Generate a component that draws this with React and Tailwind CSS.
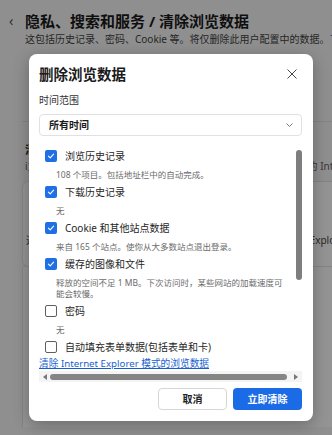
import React from 'react';

const items = [
  { label: '浏览历史记录', desc: ['108 个项目。包括地址栏中的自动完成。'], on: true },
  { label: '下载历史记录', desc: ['无'], on: true },
  { label: 'Cookie 和其他站点数据', desc: ['来自 165 个站点。使你从大多数站点退出登录。'], on: true },
  { label: '缓存的图像和文件', desc: ['释放的空间不足 1 MB。下次访问时，某些网站的加载速度可', '能会较慢。'], on: true },
  { label: '密码', desc: ['无'], on: false },
  { label: '自动填充表单数据(包括表单和卡)', desc: ['无'], on: false },
];

function Check({ on }) {
  if (!on) return <span className="h-[12px] w-[12px] shrink-0 rounded-[2px] border border-[#5f5f5f] bg-white" />;
  return (
    <span className="flex h-[12px] w-[12px] shrink-0 items-center justify-center rounded-[2px] bg-[#1f6fe5]">
      <svg width="8" height="8" viewBox="0 0 8 8">
        <path d="M1.4 4.1 3.2 5.8 6.6 2.2" stroke="#fff" strokeWidth="1.1" fill="none" strokeLinecap="round" strokeLinejoin="round" />
      </svg>
    </span>
  );
}

export default function App() {
  return (
    <div className="relative h-[435px] w-[332px] overflow-hidden bg-[#f7f7f7] font-['Noto_Sans','Noto_Sans_CJK_SC',sans-serif] text-[#1a1a1a]">
      {/* settings page behind the dialog */}
      <div className="flex items-center pt-[10px]">
        <span className="w-[25px] pl-[9px] text-[14px] leading-[22px] text-[#555]">‹</span>
        <h1 className="whitespace-nowrap text-[15px] font-bold leading-[22px]">隐私、搜索和服务 / 清除浏览数据</h1>
      </div>
      <p className="whitespace-nowrap pl-[25px] text-[10px] leading-[14px] text-[#444]">
        这包括历史记录、密码、Cookie 等。将仅删除此用户配置中的数据。<span className="text-[#1a5fd0]">了解更多</span>
      </p>
      <div className="ml-[22px] mt-[75px] border-t border-[#e3e3e3]">
        <div className="h-[59px] pl-[3px] pt-[20px]">
          <p className="whitespace-nowrap text-[11px] font-bold leading-[16px]">清除浏览数据</p>
          <p className="whitespace-nowrap text-[10px] leading-[16px] text-[#616161]">
            i立即清除浏览数据。这些设置也同样会适用于当前录用户配置中的 Internet Explorer 模式
          </p>
        </div>
        <div className="h-[86px] rounded-l-md border-y border-l border-[#e3e3e3] bg-white pl-[3px] pt-[50px]">
          <p className="whitespace-nowrap text-[10px] leading-[16px] text-[#444]">
            选择每次关闭浏览器时要清除的内容，其中也包括使用 Internet Explorer 模式
          </p>
        </div>
        <div className="h-[160px] border-l border-[#e3e3e3] bg-white" />
      </div>

      {/* dim overlay + dialog */}
      <div className="absolute inset-0 bg-black/[0.42] pl-[29px] pt-[54px]">
        <div className="flex h-[367px] w-[284px] flex-col rounded-lg bg-white pl-[10px] pr-[11px] shadow-[0_4px_16px_rgba(0,0,0,0.28)]">
          <div className="flex items-center justify-between pt-[10px]">
            <h2 className="text-[14.5px] font-bold leading-[20px]">删除浏览数据</h2>
            <svg width="10" height="10" viewBox="0 0 10 10" className="mr-[5px]">
              <path d="M0.5 0.5 9.5 9.5M9.5 0.5 0.5 9.5" stroke="#444" strokeWidth="1" />
            </svg>
          </div>
          <p className="mt-[9px] text-[10px] leading-[14px] text-[#333]">时间范围</p>
          <div className="mt-[7px] flex h-[22px] items-center justify-between rounded-[4px] border border-[#e1e1e1] pl-[9px] pr-[8px]">
            <span className="text-[10px] font-bold">所有时间</span>
            <svg width="7" height="4" viewBox="0 0 7 4">
              <path d="M0.5 0.5 3.5 3.5 6.5 0.5" stroke="#666" strokeWidth="0.9" fill="none" />
            </svg>
          </div>

          <div className="mt-[4px] flex h-[216px] overflow-hidden">
            <div className="flex-1 pl-[6px] pt-[7px]">
              {items.map((it) => (
                <div key={it.label}>
                  <div className="flex h-[18px] items-center gap-[8px]">
                    <Check on={it.on} />
                    <span className="whitespace-nowrap text-[10px] leading-[14px] text-[#1f1f1f]">{it.label}</span>
                  </div>
                  <div className="py-[3.5px] pl-[11px] text-[8.5px] leading-[11px] text-[#6b6b6b]">
                    {it.desc.map((d) => (
                      <p key={d} className="whitespace-nowrap">{d}</p>
                    ))}
                  </div>
                </div>
              ))}
            </div>
            <div className="w-[6px] pt-[10px]">
              <div className="h-[130px] rounded-full bg-[#7e7e7e]" />
            </div>
          </div>

          <a className="whitespace-nowrap text-[9.7px] leading-[15px] text-[#1a5fd0] underline">清除 Internet Explorer 模式的浏览数据</a>
          <div className="flex h-[11px] items-center gap-[3px] bg-[#f4f4f4] px-[4px]">
            <svg width="4" height="6" viewBox="0 0 4 6"><path d="M4 0 0 3 4 6Z" fill="#777" /></svg>
            <div className="h-[6px] flex-1 rounded-full bg-[#858585]" />
            <svg width="4" height="6" viewBox="0 0 4 6" className="ml-[4px]"><path d="M0 0 4 3 0 6Z" fill="#777" /></svg>
          </div>

          <div className="mt-[6px] flex justify-end gap-[6px]">
            <button className="h-[22px] w-[69px] rounded-[4px] border border-[#d6d6d6] bg-white text-[10px] font-bold text-[#222]">取消</button>
            <button className="h-[22px] w-[69px] rounded-[4px] bg-[#1c6be6] text-[10px] font-bold text-white">立即清除</button>
          </div>
        </div>
      </div>
    </div>
  );
}
